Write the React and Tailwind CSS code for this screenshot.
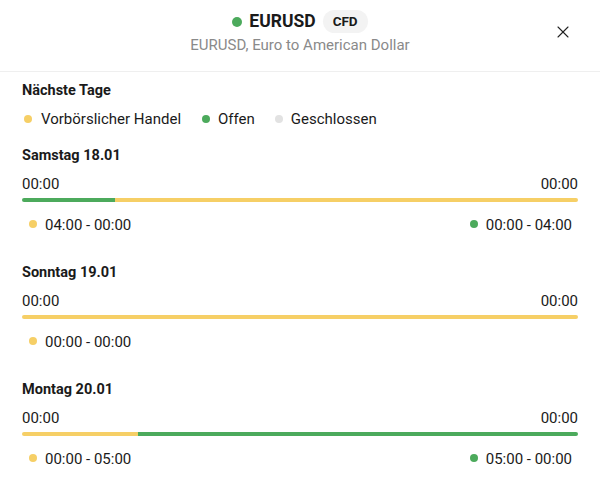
import { X } from 'lucide-react'

const YELLOW = 'bg-[#f6cf66]'
const GREEN = 'bg-[#4caa5c]'

const days = [
  {
    title: 'Samstag 18.01',
    segments: [
      { color: GREEN, pct: 16.67 },
      { color: YELLOW, pct: 83.33 },
    ],
    left: { color: YELLOW, text: '04:00 - 00:00' },
    right: { color: GREEN, text: '00:00 - 04:00' },
  },
  {
    title: 'Sonntag 19.01',
    segments: [{ color: YELLOW, pct: 100 }],
    left: { color: YELLOW, text: '00:00 - 00:00' },
  },
  {
    title: 'Montag 20.01',
    segments: [
      { color: YELLOW, pct: 20.83 },
      { color: GREEN, pct: 79.17 },
    ],
    left: { color: YELLOW, text: '00:00 - 05:00' },
    right: { color: GREEN, text: '05:00 - 00:00' },
  },
]

function Dot({ color }) {
  return <span className={`inline-block h-2 w-2 shrink-0 rounded-full ${color}`} />
}

function Day({ day }) {
  return (
    <div className="pb-[28px]">
      <div className="text-[14.5px] font-bold leading-[20px] text-[#1a1a1a]">{day.title}</div>
      <div className="mt-[8px] flex justify-between text-[15px] leading-[20px] text-[#1a1a1a]">
        <span>00:00</span>
        <span>00:00</span>
      </div>
      <div className="mt-[4px] flex h-[4px] overflow-hidden rounded-full">
        {day.segments.map((s, i) => (
          <div key={i} className={`h-full ${s.color}`} style={{ width: `${s.pct}%` }} />
        ))}
      </div>
      <div className="mt-[13px] flex h-[20px] items-center justify-between pl-[7px] pr-[6px] text-[15px] text-[#1a1a1a]">
        <div className="flex items-center gap-[8px]">
          <span className="-mt-[3px] flex"><Dot color={day.left.color} /></span>
          <span>{day.left.text}</span>
        </div>
        {day.right && (
          <div className="flex items-center gap-[8px]">
            <span className="-mt-[3px] flex"><Dot color={day.right.color} /></span>
            <span>{day.right.text}</span>
          </div>
        )}
      </div>
    </div>
  )
}

export default function App() {
  return (
    <div className="h-[485px] w-[600px] overflow-hidden bg-white" style={{ fontFamily: 'Roboto, "Liberation Sans", sans-serif' }}>
      <div className="relative flex h-[72px] flex-col items-center border-b border-[#efefef] pt-[10px]">
        <div className="flex items-center">
          <span className={`h-[10px] w-[10px] rounded-full ${GREEN}`} />
          <span className="ml-[7px] text-[17.5px] font-bold leading-[23px] text-[#1a1a1a]">EURUSD</span>
          <span className="ml-[7px] rounded-full bg-[#f3f3f3] px-[10px] py-[2px] text-[13.5px] font-bold leading-[19px] text-[#1a1a1a]">CFD</span>
        </div>
        <div className="mt-[2px] text-[15px] leading-[20px] text-[#8a8a8a]">EURUSD, Euro to American Dollar</div>
        <X className="absolute right-[27px] top-[22px] h-[20px] w-[20px] text-[#222]" strokeWidth={1.3} />
      </div>
      <div className="px-[22px] pt-[9px]">
        <div className="text-[14.5px] font-bold leading-[20px] text-[#1a1a1a]">Nächste Tage</div>
        <div className="mt-[8px] flex items-center text-[15px] leading-[20px] text-[#1a1a1a]">
          <span className="ml-[2px] flex items-center gap-[9px]"><Dot color={YELLOW} />Vorbörslicher Handel</span>
          <span className="ml-[21px] flex items-center gap-[8px]"><Dot color={GREEN} />Offen</span>
          <span className="ml-[20px] flex items-center gap-[8px]"><Dot color="bg-[#e2e2e2]" />Geschlossen</span>
        </div>
        <div className="mt-[17px]">
          {days.map((d) => (
            <Day key={d.title} day={d} />
          ))}
        </div>
      </div>
    </div>
  )
}
